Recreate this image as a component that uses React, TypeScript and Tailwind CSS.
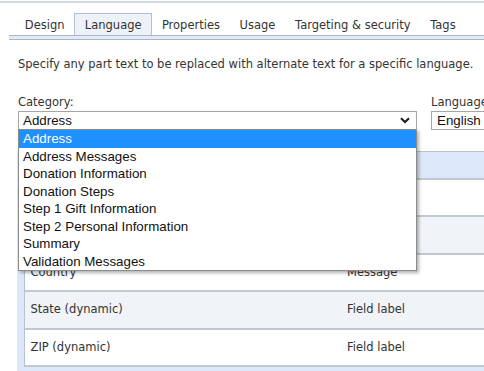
import React from "react";

const tabs = ["Design", "Language", "Properties", "Usage", "Targeting & security", "Tags"];
const items = [
  "Address",
  "Address Messages",
  "Donation Information",
  "Donation Steps",
  "Step 1 Gift Information",
  "Step 2 Personal Information",
  "Summary",
  "Validation Messages",
];
const rows = [
  { a: "", b: "", bg: "bg-white" },
  { a: "", b: "", bg: "bg-[#f0f3f8]" },
  { a: "Country", b: "Message", bg: "bg-white" },
  { a: "State (dynamic)", b: "Field label", bg: "bg-[#f0f3f8]" },
  { a: "ZIP (dynamic)", b: "Field label", bg: "bg-white" },
];

function Chevron() {
  return (
    <svg width="10" height="7" viewBox="0 0 10 7" className="block">
      <polyline points="1,1.2 5,5 9,1.2" fill="none" stroke="#1a1a1a" strokeWidth="2" />
    </svg>
  );
}

export default function App() {
  return (
    <div className="relative w-[484px] h-[371px] overflow-hidden bg-white text-[11.5px] text-[#333] font-['DejaVu_Sans',Verdana,sans-serif]">
      <div className="mt-px h-[2px] bg-[#d3dae4]" />
      <div className="mt-[10px] flex h-[22px] pl-[15px]">
        {tabs.map((t) => (
          <div
            key={t}
            className={
              "flex items-center whitespace-nowrap pt-[3px] " +
              (t === "Language"
                ? "border-x border-t border-[#b4c0d0] bg-[#edf2f9] px-[9.5px]"
                : "px-[9.8px]")
            }
          >
            {t}
          </div>
        ))}
      </div>
      <div className="ml-[9px] h-[5px] border-y border-[#aab6c6] bg-[#e4ebf5]" />
      <div className="mt-[17px] whitespace-nowrap pl-[18px] leading-[14px]">
        Specify any part text to be replaced with alternate text for a specific language.
      </div>
      <div className="mt-[24px] flex gap-[14px] pl-[18px]">
        <div className="relative w-[399px] shrink-0">
          <div className="leading-[14px]">Category:</div>
          <div className="mt-[2px] flex h-[19px] items-center justify-between border border-[#a6a6a6] pl-[4px] pr-[6px] font-['Liberation_Sans',Arial,sans-serif] text-[13.333px] text-[#111]">
            <span>Address</span>
            <Chevron />
          </div>
          <div className="absolute left-0 top-[34px] z-10 w-[399px] border border-[#8c8c8c] bg-white font-['Liberation_Sans',Arial,sans-serif] text-[13.333px] text-[#111] shadow-[2px_2px_3px_rgba(0,0,0,0.3)]">
            {items.map((it, i) => (
              <div
                key={it}
                className={
                  "h-[17.5px] whitespace-nowrap pl-[4px] leading-[17.5px] " +
                  (i === 0 ? "bg-[#1e90ff] text-white" : "")
                }
              >
                {it}
              </div>
            ))}
          </div>
        </div>
        <div className="w-[120px] shrink-0">
          <div className="whitespace-nowrap leading-[14px]">Language:</div>
          <div className="mt-[2px] flex h-[19px] items-center border border-[#a6a6a6] pl-[5px] font-['Liberation_Sans',Arial,sans-serif] text-[13.333px] text-[#111]">
            English
          </div>
        </div>
      </div>
      <div className="ml-[17px] mt-[21px] w-[600px] bg-[#dce8f9] pb-[10px] pl-[7px]">
        <div className="border-l border-t border-[#b8c2ce]">
          <div className="h-[25.5px] bg-[#dce8f9]" />
          {rows.map((r, i) => (
            <div
              key={i}
              className={"grid h-[37.5px] grid-cols-[316.5px_1fr] items-center border-t-2 border-[#c0c8d2] " + r.bg}
            >
              <div className="pl-[5.5px]">{r.a}</div>
              <div className="pl-[5.5px]">{r.b}</div>
            </div>
          ))}
          <div className="h-[2px] bg-[#c0c8d2]" />
        </div>
      </div>
    </div>
  );
}
